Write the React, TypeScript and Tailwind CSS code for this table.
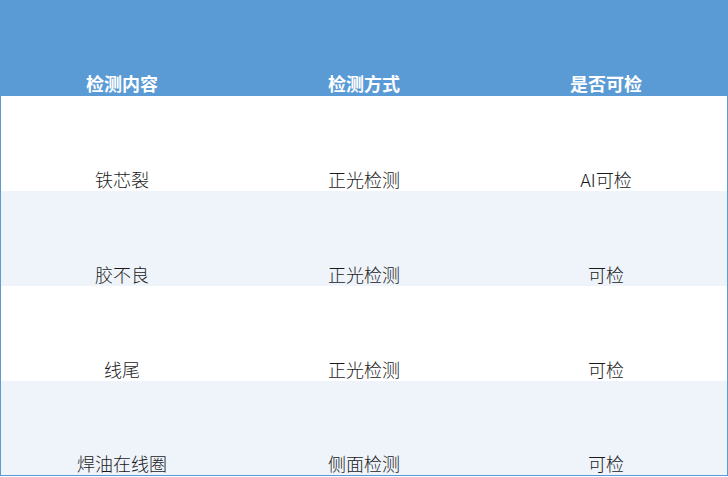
const rows = [
  { item: "铁芯裂", method: "正光检测", ok: "AI可检" },
  { item: "胶不良", method: "正光检测", ok: "可检" },
  { item: "线尾", method: "正光检测", ok: "可检" },
  { item: "焊油在线圈", method: "侧面检测", ok: "可检" },
];

export default function App() {
  return (
    <div
      className="w-[728px] h-[477px] bg-white"
      style={{ fontFamily: '"Noto Sans CJK SC", "Noto Sans", sans-serif' }}
    >
      <div className="w-[728px] border-x border-b border-[#5b9bd5]">
        {/* header */}
        <div className="grid grid-cols-3 h-[96px] bg-[#5b9bd5] text-white font-bold text-[18px] leading-none">
          <div className="flex items-end justify-center pb-[4px]">检测内容</div>
          <div className="flex items-end justify-center pb-[4px]">检测方式</div>
          <div className="flex items-end justify-center pb-[4px]">是否可检</div>
        </div>
        {rows.map((r, i) => (
          <div
            key={i}
            className={`grid grid-cols-3 text-[18px] font-light leading-none text-[#1a1a1a] ${
              i % 2 === 1 ? "bg-[#eff4fb]" : "bg-white"
            } ${i === rows.length - 1 ? "h-[94px]" : "h-[95px]"}`}
          >
            <div className="flex items-end justify-center pb-[3px]">{r.item}</div>
            <div className="flex items-end justify-center pb-[3px]">{r.method}</div>
            <div className="flex items-end justify-center pb-[3px]">{r.ok}</div>
          </div>
        ))}
      </div>
    </div>
  );
}
